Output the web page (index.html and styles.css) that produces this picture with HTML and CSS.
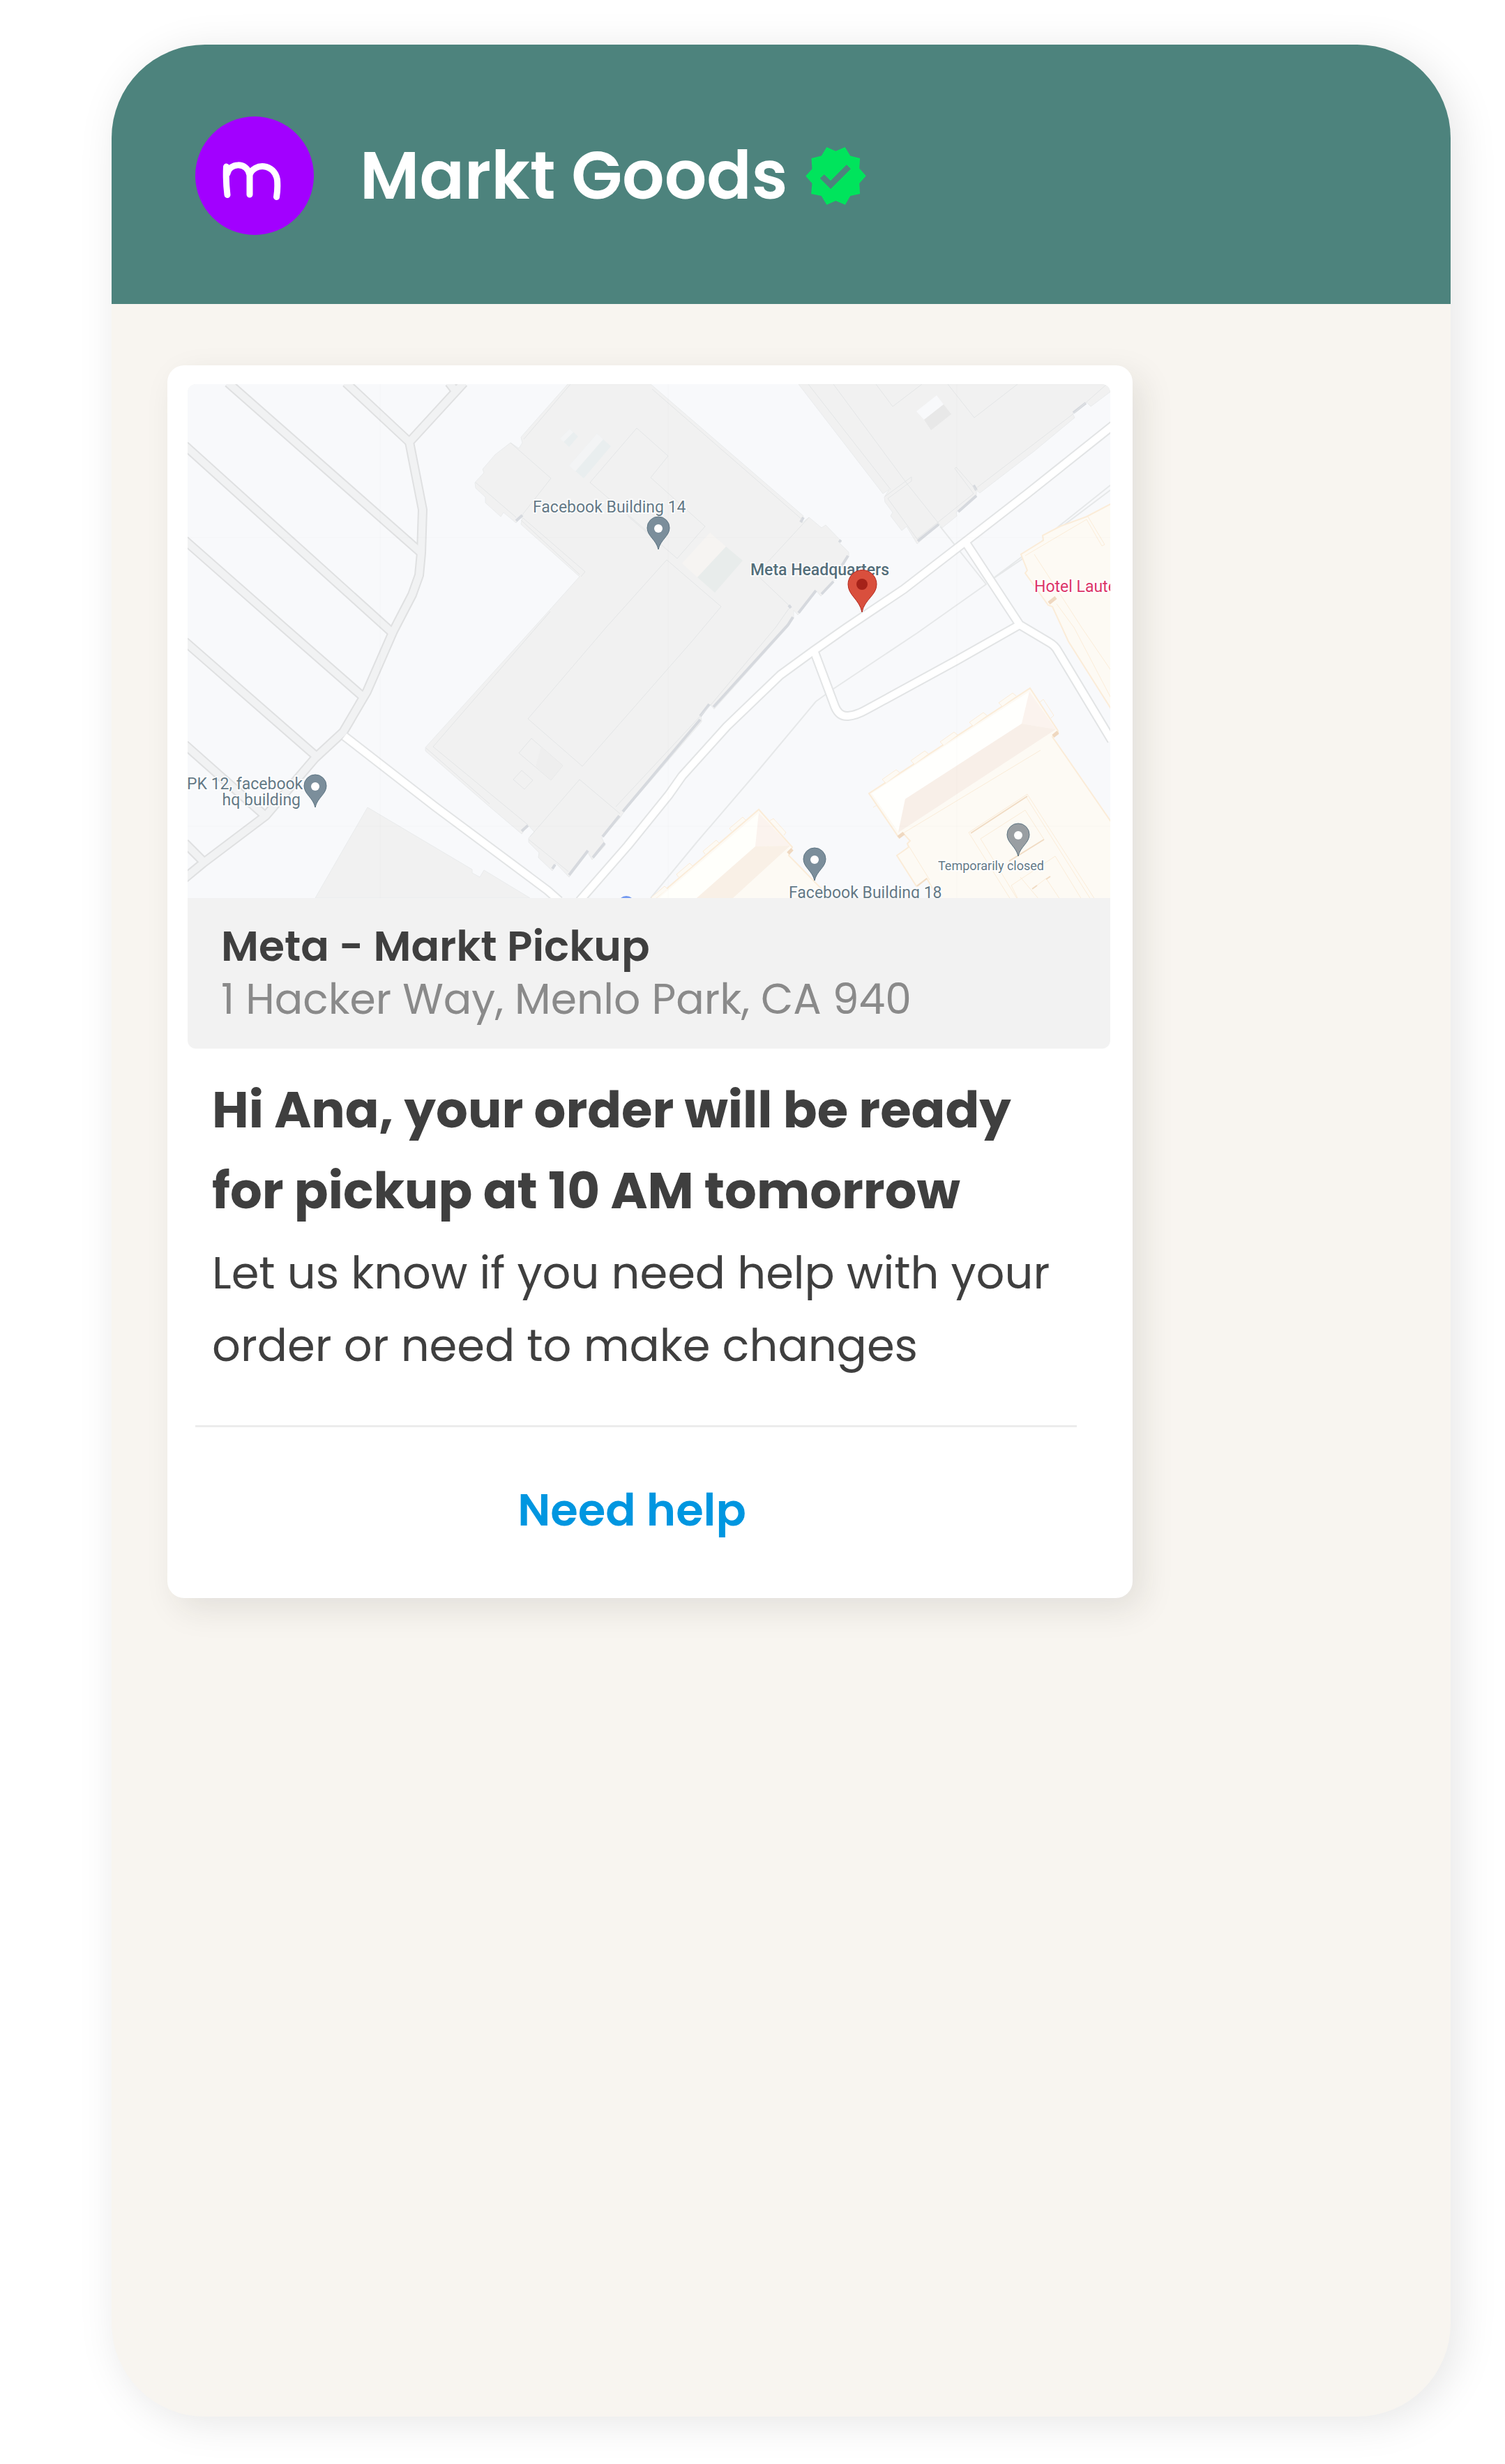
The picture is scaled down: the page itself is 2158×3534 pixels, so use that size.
FILE: index.html
```html
<!DOCTYPE html>
<html lang="en">
<head>
    <meta charset="UTF-8">
    <meta name="viewport" content="width=device-width, initial-scale=1.0">
    <title>Markt Goods</title>
    <link rel="stylesheet" href="styles.css">
</head>
<body>
    <div class="phone">
        <header>
            <svg class="avatar" viewBox="0 0 170 170" role="img" aria-label="Markt Goods logo">
                <circle cx="85" cy="85" r="85" fill="#a200ff"/>
                <path d="M44.500 72Q43.500 92 46 112.500M46 82C48 67 74 64 78 84V112M78 84C84 66 114 67 117.500 91Q118.500 104 116.500 115.500" fill="none" stroke="#fff" stroke-width="9" stroke-linecap="round" stroke-linejoin="round"/>
            </svg>
            <h1>Markt Goods</h1>
            <svg class="badge" viewBox="75 63 261 250" role="img" aria-label="Verified">
                <path fill="#00e45c" fill-rule="evenodd" d="M75 188L103 157L100 111L143 101L166 63L205 80L245 63L268 101L310 111L307 155L336 187L307 220L310 265L268 274L246 312L205 295L166 312L143 274L99 265L103 220ZM137 198L183 244L270 157L252 139L183 208L155 181Z"/>
            </svg>
        </header>

        <main>
            <div class="message">
                <div class="location">
                    <svg class="map" viewBox="269 551 1323 737" role="img" aria-label="Map of Meta Headquarters">
                        <defs>
                            <path id="pin" d="M0 0C-3 -14 -16 -19 -16 -31A16 16 0 0 1 16 -31C16 -19 3 -14 0 0Z"/>
                            <path id="tab" d="M1437 1013L1432 1008L1452 994L1457 998"/>
                            <path id="tab2" d="M1049 1192L1046 1188L1065 1172L1069 1176"/>
                            <g id="lanes">
                                <path d="M644 549L654 562"/>
                                <path d="M665 549L587 634L606 731L604 793L601 825L591 853L564 905L526 992L492 1050L452 1087L381 1170L291 1238L262 1262"/>
                                <path d="M327 549L604 793"/>
                                <path d="M496 549L587 634"/>
                                <path d="M265 639L562 907"/>
                                <path d="M265 775L407 900L519 998"/>
                                <path d="M265 920L455 1086"/>
                                <path d="M265 1068L379 1169"/>
                                <path d="M265 1209L292 1236"/>
                            </g>
                            <g id="roads">
                                <path d="M494 1056L624 1157L785 1277L802 1292"/>
                                <path d="M831 1292L900 1213L959 1140L978 1113L1042 1042L1119 968L1167 933L1214 900L1296 845L1384 777L1473 708L1596 610"/>
                                <path d="M1167 933L1197 1013Q1203 1028 1216 1027Q1228 1026 1242 1018L1372 947L1462 896"/>
                                <path d="M1384 777L1462 896L1504 921Q1513 926 1517 934L1594 1062"/>
                            </g>
                        </defs>

                        <rect x="269" y="551" width="1323" height="737" fill="#f8f9fb"/>

                        <!-- roads -->
                        <g fill="none" stroke-linejoin="round">
                            <use href="#lanes" stroke="#dfe0e1" stroke-width="14"/>
                            <use href="#lanes" stroke="#f1f2f3" stroke-width="10"/>
                            <path d="M1348 755L1414 838L1315 908L1195 988L1170 1006L1089 1103L999 1208L933 1288M1424 830L1464 803L1518 755L1592 696M1418 834L1466 798L1592 703" stroke="#e6e8e9" stroke-width="2"/>
                            <use href="#roads" stroke="#e2e4e5" stroke-width="14"/>
                            <use href="#roads" stroke="#fff" stroke-width="10"/>
                        </g>

                        <!-- grey buildings -->
                        <g fill="#f1f1f1" stroke="#e9ebec" stroke-width="1">
                            <path d="M527 1158L677 1247L677 1252L688 1258L694 1248L760 1288H452Z"/>
                            <path d="M814 551L747 627L749 635L744 643L732 635L710 652L692 673L694 678L681 692L682 700L696 713L696 721L718 741L722 735L740 750L750 737L747 752L831 827L789 874L610 1072V1077L702 1157L748 1196L757 1183L766 1193L758 1202V1208L773 1223L772 1230L792 1249L797 1238L816 1258L843 1223L849 1233L868 1212L863 1202L889 1173L893 1167L900 1158L1006 1035L1005 1025L1018 1010L1024 1017L1129 900L1138 887V875L1144 882L1171 848L1177 855L1196 833L1197 827L1217 798V792L1202 777H1207L1184 753L1178 757L1160 742L1150 750L1152 740L933 551Z"/>
                            <path d="M1145 551L1266 708L1275 702L1268 713L1269 720L1280 735L1277 740L1293 761L1300 755L1315 780L1347 752L1351 757L1372 740L1371 735L1400 713V703L1405 707L1483 647L1541 599L1538 593L1558 577L1564 583L1592 562V551Z"/>
                        </g>
                        <g fill="none" stroke="#d6d9de" stroke-width="4">
                            <path d="M816 1255L843 1220M850 1230L867 1209M864 1200L888 1170M893 1164L1004 1032M1004 1027L1017 1010M1023 1014L1130 896L1137 885M1145 879L1170 847M1178 852L1195 834M1203 818L1216 797M748 1192L757 1184M792 1246L796 1240M740 747L749 739"/>
                            <path d="M1316 776L1346 752M1374 734L1400 711M1539 592L1557 578M1396 696L1400 703M1148 749L1152 742M1131 868L1134 872M1203 775L1206 777"/>
                        </g>
                        <g fill="none" stroke="#e3e5e6" stroke-width="1">
                            <path d="M818 551L751 630M732 635L790 686L750 737M682 692L740 742M750 743L839 820L833 827M747 746L831 824"/>
                            <path d="M913 614L846 692L928 762M913 614L958 654L933 685L1011 755L971 801L900 740M935 558L1150 745"/>
                            <path d="M956 803L1034 870L992 920L835 1099L757 1031L869 900L956 803"/>
                            <path d="M1160 742L1100 807M1089 828L1131 868M1131 873L1112 900L1020 1010L883 1157M831 1118L889 1167M831 1118L760 1200"/>
                            <path d="M789 877L769 900L621 1071L757 1183M611 1073L702 1153M758 1204L815 1250"/>
                            <path d="M762 1059L807 1098L790 1119L744 1080ZM748 1105L764 1119L752 1132L736 1118Z"/>
                            <path d="M1159 551L1277 702M1195 551L1300 693L1347 752M1256 551L1280 583L1322 551M1359 551L1397 599L1459 551M1400 700L1537 595L1587 551"/>
                            <path d="M1269 712L1307 684V690L1273 715L1315 773L1396 708L1369 672L1371 670L1400 703"/>
                        </g>
                        <path d="M817 615L829 626L816 641L803 629ZM856 622L876 640L837 686L816 668Z" fill="#e9eeef"/>
                        <path d="M817 615L822 620L808 634L803 629ZM856 622L865 630L825 676L816 668Z" fill="#f3f4f5"/>
                        <path d="M776 1071L807 1098L790 1119L768 1100Z" fill="#eeeeee"/>
                        <path d="M1018 764L1041 784L1000 828L978 808Z" fill="#f6f4f2"/>
                        <path d="M1041 784L1065 804L1025 850L1000 828Z" fill="#e8eceb"/>
                        <path d="M1343 567L1353 580L1325 602L1314 590Z" fill="#f8f9fb"/>
                        <path d="M1353 580L1364 594L1335 617L1325 602Z" fill="#e8e8e8"/>

                        <!-- cream buildings -->
                        <g fill="#fdfaf4" stroke="#fbecd8" stroke-width="2">
                            <path d="M1594 722L1558 741L1520 755L1495 768L1496 775L1464 795L1473 818L1470 822L1503 868L1509 870L1532 920L1594 1018"/>
                            <path d="M1477 987L1517 1048V1053L1509 1057L1516 1067L1594 1180V1290H1346L1329 1260L1314 1271L1286 1227L1303 1215L1301 1210L1305 1206L1295 1195L1288 1200L1246 1138Z"/>
                            <path d="M1088 1161L1136 1215L1131 1227L1141 1237L1178 1275L1188 1290H938Z"/>
                            <path d="M1470 797L1558 745L1580 783L1584 781L1560 741M1483 795L1551 900L1594 963M1515 866L1540 900L1594 1003" fill="none" stroke-width="1"/>
                            <path d="M1570 1290L1473 1139L1389 1194L1449 1290M1564 1290L1472 1144M1459 1290L1406 1203L1470 1162L1497 1204L1447 1235M1551 1290L1513 1228L1450 1270L1460 1290M1463 1258L1490 1290M1480 1275L1500 1260L1520 1290M1492 1076L1295 1195M1252 1158L1257 1155L1277 1184M1301 1210L1333 1262M1491 1007L1496 1003L1511 1026L1507 1030" fill="none" stroke-width="1"/>
                            <g fill="#fdfaf4" stroke-width="1">
                                <use href="#tab"/>
                                <use href="#tab" x="-42" y="28"/>
                                <use href="#tab" x="-84" y="56"/>
                                <use href="#tab" x="-126" y="83"/>
                                <use href="#tab" x="-167" y="110"/>
                                <use href="#tab2"/>
                                <use href="#tab2" x="-38" y="33"/>
                                <use href="#tab2" x="-76" y="66"/>
                                <use href="#tab2" x="-112" y="99"/>
                                <path d="M1104 1177L1109 1174L1127 1194L1124 1198"/>
                            </g>
                        </g>
                        <path d="M1476 992L1465 1038L1298 1146L1288 1193L1250 1138Z" fill="#fffffd"/>
                        <path d="M1476 992L1514 1046L1465 1038Z" fill="#fbf3ee"/>
                        <path d="M1465 1038L1514 1046L1288 1194L1298 1146Z" fill="#f8efe8"/>
                        <path d="M1088 1166L1083 1214L999 1288H945Z" fill="#fffffb"/>
                        <path d="M1088 1166L1133 1213L1083 1214Z" fill="#fbf3ee"/>
                        <path d="M1083 1214L1133 1213L1051 1288H999Z" fill="#f9f0e6"/>
                        <path d="M1288 1201L1296 1195M1510 1056L1517 1050M1130 1224L1136 1218M1504 865L1514 857" stroke="#efd8c0" stroke-width="5"/>
                        <path d="M1392 1195L1473 1142M1447 1235L1497 1204M1315 1271L1329 1260M1480 1275L1487 1270M1500 1261L1506 1257" stroke="#f1dcc4" stroke-width="2"/>

                        <!-- tile seams -->
                        <path d="M545 551V1288M958 551V1288M1372 551V1288M269 771H1592M269 1185H1592" stroke="#000" stroke-opacity="0.02" stroke-width="1"/>
                        <circle cx="898" cy="1297" r="12" fill="#7399f0"/>

                        <!-- places -->
                        <g class="place">
                            <text x="764" y="735">Facebook Building 14</text>
                            <text x="268" y="1132">PK 12, facebook</text>
                            <text x="431" y="1155" text-anchor="end">hq building</text>
                            <text x="1131" y="1288">Facebook Building 18</text>
                            <text class="place-main" x="1076" y="825">Meta Headquarters</text>
                            <text class="place-hotel" x="1483" y="849">Hotel Laute</text>
                            <text class="place-note" x="1345" y="1248">Temporarily closed</text>
                        </g>
                        <g fill="#7b8e9b" stroke="#5d7482" stroke-width="1">
                            <use href="#pin" x="944" y="788"/>
                            <use href="#pin" x="452" y="1158"/>
                            <use href="#pin" x="1168" y="1263"/>
                            <use href="#pin" x="1460" y="1228" fill="#999ea2"/>
                        </g>
                        <g fill="#fff">
                            <circle cx="944" cy="758" r="6"/>
                            <circle cx="452" cy="1128" r="6"/>
                            <circle cx="1168" cy="1233" r="6"/>
                            <circle cx="1460" cy="1198" r="6"/>
                        </g>
                        <path d="M1236 878C1232 859 1216 854 1216 838A20.500 20.500 0 0 1 1257 838C1257 854 1240 859 1236 878Z" fill="#d94f3d" stroke="#b3281d" stroke-width="1"/>
                        <circle cx="1236" cy="838" r="8" fill="#a52219"/>
                    </svg>
                    <div class="address">
                        <h3>Meta - Markt Pickup</h3>
                        <p>1 Hacker Way, Menlo Park, CA 940</p>
                    </div>
                </div>
                <div class="message-text">
                    <h2>Hi Ana, your order will be ready<br>for pickup at 10 AM tomorrow</h2>
                    <p>Let us know if you need help with your<br>order or need to make changes</p>
                </div>
                <div class="actions">
                    <button type="button" class="help-btn">Need help</button>
                </div>
            </div>
        </main>
    </div>
</body>
</html>
```

FILE: styles.css
```css
* {
    margin: 0;
    padding: 0;
    box-sizing: border-box;
}

body {
    font-family: Poppins, Inter, sans-serif;
    background-color: #fff;
    color: #3f3f3f;
    min-height: 100vh;
    display: flex;
    padding: 64px 78px 68px 160px;
}

.phone {
    flex: 1;
    display: flex;
    flex-direction: column;
    background-color: #f8f5f0;
    border-radius: 134px;
    overflow: hidden;
    box-shadow: 10px 8px 60px rgba(0, 0, 0, 0.1);
}

header {
    display: flex;
    align-items: center;
    padding: 103px 120px 99px;
    background-color: #4d837d;
    color: #fff;
}

.avatar {
    width: 170px;
    height: 170px;
    margin-right: 66px;
}

h1 {
    font-size: 95px;
    font-weight: 600;
    line-height: 120px;
}

.badge {
    width: 87px;
    height: 83px;
    margin-left: 25px;
}

main {
    flex-grow: 1;
    padding: 88px 80px;
}

.message {
    width: 100%;
    max-width: 1384px;
    padding: 27px 32px 36px 29px;
    background-color: #fff;
    border-radius: 24px;
    box-shadow: 14px 16px 48px rgba(40, 35, 30, 0.1);
}

.location {
    background-color: #f2f2f2;
    border-radius: 12px;
    overflow: hidden;
}

.map {
    display: block;
    width: 100%;
    height: auto;
}

.place {
    font-family: Roboto, sans-serif;
    font-size: 23px;
    fill: #647986;
    stroke: #fff;
    stroke-width: 3px;
    paint-order: stroke;
}

.place-main {
    fill: #546e7a;
    font-weight: 500;
}

.place-hotel {
    fill: #dc3468;
}

.place-note {
    font-size: 18px;
}

.address {
    padding: 31px 48px 33px;
}

h3 {
    font-size: 60px;
    font-weight: 600;
    line-height: 76px;
}

.address p {
    font-size: 60px;
    line-height: 76px;
    color: #8a8a8a;
}

.message-text {
    padding: 30px 35px 62px;
}

h2 {
    font-size: 72px;
    font-weight: 700;
    line-height: 116px;
}

.message-text p {
    margin-top: 8px;
    font-size: 64px;
    line-height: 104px;
}

.actions {
    margin: 0 48px 0 11px;
    border-top: 3px solid #ececec;
}

.help-btn {
    width: 100%;
    padding: 71px 12px 42px 0;
    border: none;
    background: none;
    color: #0096e0;
    font-family: inherit;
    font-size: 64px;
    font-weight: 600;
    line-height: 96px;
    text-align: center;
    cursor: pointer;
}
```
